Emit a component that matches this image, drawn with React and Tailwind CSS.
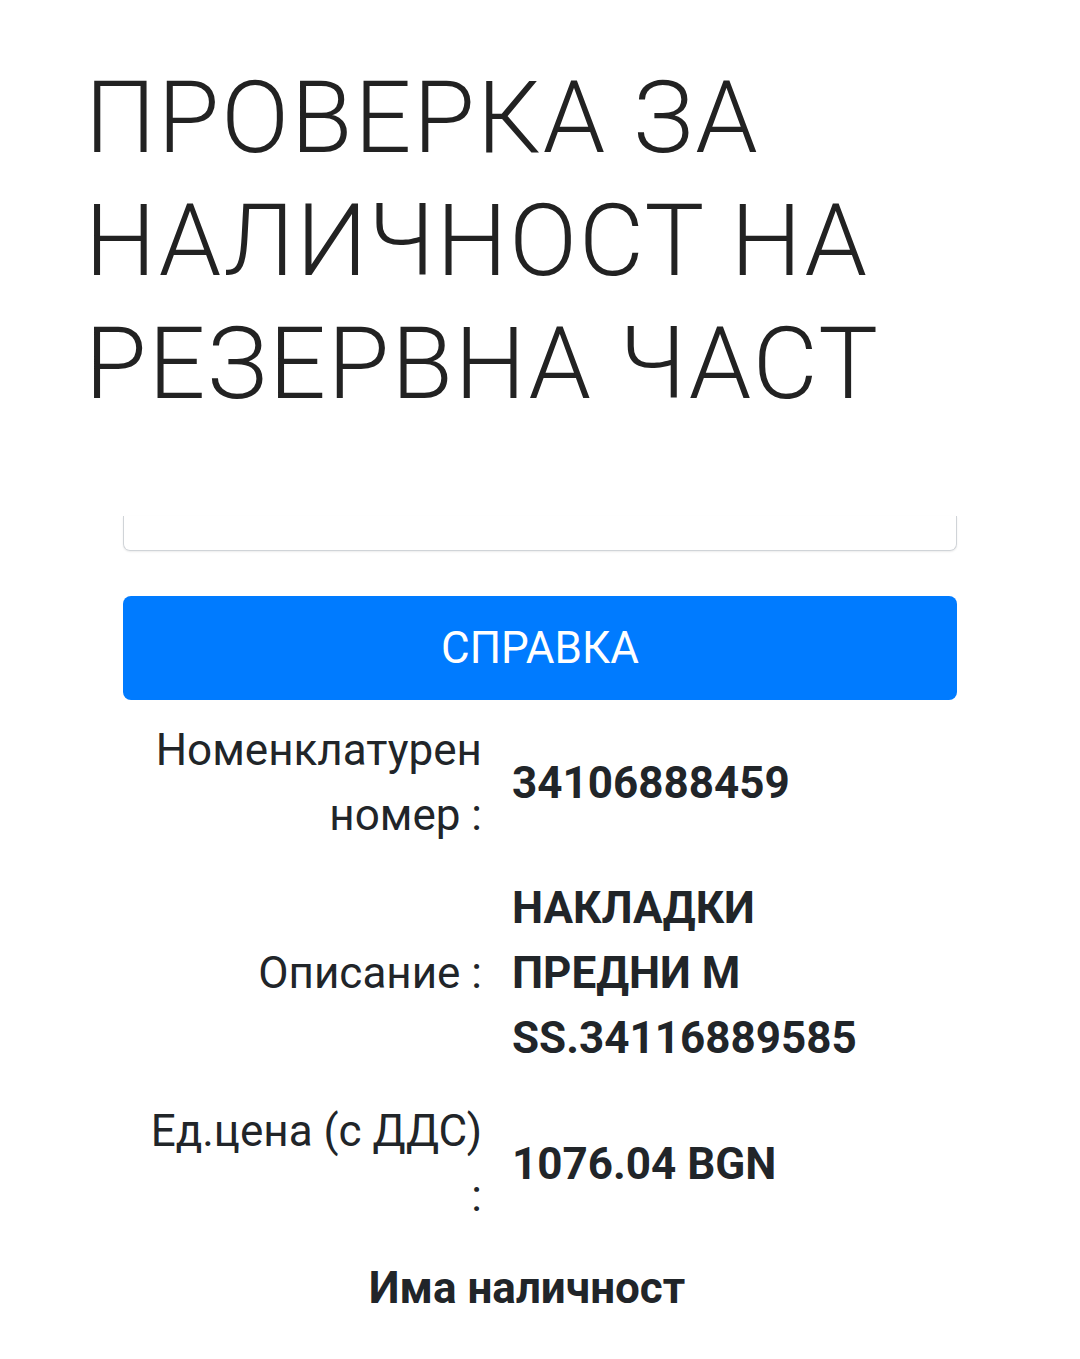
import React from 'react';

const rows = [
  { label: 'Номенклатурен номер :', value: '34106888459' },
  { label: 'Описание :', value: 'НАКЛАДКИ ПРЕДНИ М SS.34116889585' },
  { label: 'Ед.цена (с ДДС) :', value: '1076.04 BGN' },
];

export default function App() {
  return (
    <div className="min-h-[1359px] bg-white text-[#212529] font-['Roboto','Liberation_Sans',sans-serif]">
      {/* Title */}
      <h1 className="pt-[56px] pl-[85px] pr-[30px] text-[100px] leading-[123px] font-light tracking-[2px] text-[#222222]">
        ПРОВЕРКА ЗА НАЛИЧНОСТ НА РЕЗЕРВНА ЧАСТ
      </h1>

      <div className="px-[123px]">
        {/* Search field (scrolled, only the lower part shows) */}
        <div className="mt-[91px] h-[35px] rounded-b-[7px] border-x border-b border-[#d0d4d8] shadow-[0_1px_2px_rgba(0,0,0,0.08)]" />

        {/* Submit */}
        <button className="mt-[45px] w-full h-[104px] rounded-[8px] bg-[#007bff] text-white text-[44px] font-normal">
          СПРАВКА
        </button>
      </div>

      {/* Result table */}
      <div className="mt-[4px] pl-[142px]">
        {rows.map((row, i) => (
          <div key={i} className="flex items-center py-[14px] text-[44px] leading-[65px]">
            <div className="w-[340px] text-right">{row.label}</div>
            <div className="w-[360px] ml-[30px] font-bold">{row.value}</div>
          </div>
        ))}
      </div>

      <div className="mt-[13px] pr-[26px] text-center text-[44px] leading-[65px] font-bold">
        Има наличност
      </div>
    </div>
  );
}
